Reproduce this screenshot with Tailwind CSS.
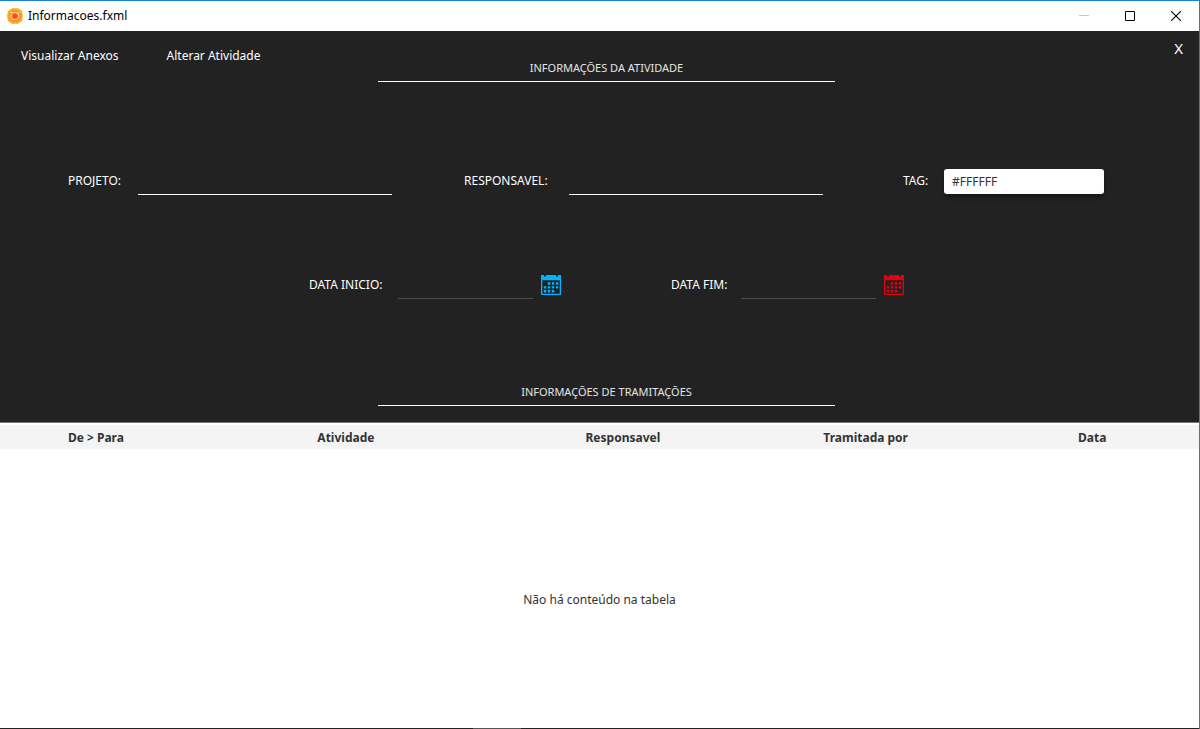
<!DOCTYPE html>
<html lang="pt-BR">
<head>
<meta charset="utf-8">
<meta name="viewport" content="width=device-width, initial-scale=1">
<title>Informacoes.fxml</title>
<script src="https://cdn.jsdelivr.net/npm/@tailwindcss/browser@4"></script>
</head>
<body class="flex min-h-screen flex-col border-t border-r border-[#1883d7] bg-white font-['Noto_Sans','Open_Sans',sans-serif] text-[12px] leading-4 text-black">
  <header class="flex h-[30px] shrink-0 items-center pl-[7px]">
    <svg class="size-4" viewBox="0 0 16 16" aria-hidden="true">
      <path d="M5 .2h6L15 3l.9 5-.9 5-4 2.800H5L1 13 .1 8 1 3z" fill="#fdaa1c"/>
      <circle cx="8" cy="8" r="5.500" fill="#fb8020"/>
      <circle cx="8" cy="8" r="2.500" fill="#f4511e"/>
      <path d="M3.500 4 6 5Q9 3.500 11 5.500L12.500 4.500M11 5.500Q13 8.500 10.500 11Q7.500 12.800 5 11Q3 8.800 4.500 6" fill="none" stroke="#ffe9cf" stroke-width="1"/>
    </svg>
    <h1 class="ml-[5px] flex-1">Informacoes.fxml</h1>
    <button type="button" aria-label="Minimizar" class="flex h-full w-[46px] items-center justify-center"><svg class="size-[10px]" viewBox="0 0 10 10"><path d="M0 4.500h10" stroke="#c8c8c8"/></svg></button>
    <button type="button" aria-label="Maximizar" class="flex h-full w-[46px] items-center justify-center"><svg class="size-[10px]" viewBox="0 0 10 10"><path d="M.5.5h9v9h-9z" fill="none" stroke="#000"/></svg></button>
    <button type="button" aria-label="Fechar janela" class="flex h-full w-[46px] items-center justify-center"><svg class="size-[10px]" viewBox="0 0 10 10"><path d="m0 0 10 10M10 0 0 10" stroke="#000" stroke-width="1.100"/></svg></button>
  </header>

  <main class="flex flex-1 flex-col">
    <section class="border-b border-[#777] bg-[#222] pb-4 text-white">
      <div class="grid grid-cols-[378fr_457fr_364fr]">
        <nav class="flex items-start gap-12 pt-[17px] pl-[21px]">
          <button type="button">Visualizar Anexos</button>
          <button type="button">Alterar Atividade</button>
        </nav>
        <h2 class="border-b border-white pt-[29px] pb-[5px] text-center text-[11px] text-[#e4e4e4]">INFORMAÇÕES DA ATIVIDADE</h2>
        <div class="flex items-start justify-end pt-[7px] pr-4"><button type="button" aria-label="Fechar" class="text-[15px] leading-5">X</button></div>
      </div>

      <form>
        <div class="mt-[87px] grid grid-cols-[68fr_70fr_254fr_72fr_105fr_254fr_80fr_41fr_160fr_95fr]">
          <label for="projeto" class="col-start-2 pt-1 whitespace-nowrap">PROJETO:</label>
          <input id="projeto" type="text" class="h-[26px] w-full min-w-0 border-b border-white bg-transparent px-1 outline-none">
          <label for="responsavel" class="col-start-5 pt-1 whitespace-nowrap">RESPONSAVEL:</label>
          <input id="responsavel" type="text" class="h-[26px] w-full min-w-0 border-b border-white bg-transparent px-1 outline-none">
          <label for="tag" class="col-start-8 pt-1 whitespace-nowrap">TAG:</label>
          <select id="tag" class="h-[25px] w-full min-w-0 appearance-none rounded-[3px] bg-white px-2 text-[#333] shadow-md shadow-black/30"><option>#FFFFFF</option></select>
        </div>

        <div class="mt-[78px] grid grid-cols-[309fr_89fr_135fr_8fr_130fr_70fr_135fr_8fr_315fr]">
          <label for="inicio" class="col-start-2 pt-1 whitespace-nowrap">DATA INICIO:</label>
          <input id="inicio" type="text" class="h-[26px] w-full min-w-0 border-b border-[#4d4d4d] bg-transparent px-1 outline-none">
          <button type="button" aria-label="Escolher data de início" class="col-start-5 mt-[2px] size-5 text-[#00b4ff]">
            <svg class="size-5" viewBox="0 0 20 20" fill="currentColor"><path fill-rule="evenodd" d="M0 0h3v1.500h2V0h10v1.500h2V0h3v20H0zM1.300 5.300v13.400h17.400V5.300z"/><path d="M6.800 7.300h2.500v2.400H6.800zm4 0h2.500v2.400h-2.500zm4 0h2.500v2.400h-2.500zM2.800 11.200h2.500v2.400H2.800zm4 0h2.500v2.400H6.800zm4 0h2.500v2.400h-2.500zm4 0h2.500v2.400h-2.500zM2.800 15h2.500v2.400H2.800zm4 0h2.500v2.400H6.800zm4 0h2.500v2.400h-2.500z"/></svg>
          </button>
          <label for="fim" class="pt-1 whitespace-nowrap">DATA FIM:</label>
          <input id="fim" type="text" class="h-[26px] w-full min-w-0 border-b border-[#4d4d4d] bg-transparent px-1 outline-none">
          <button type="button" aria-label="Escolher data de fim" class="col-start-9 mt-[2px] size-5 text-[#e3000f]">
            <svg class="size-5" viewBox="0 0 20 20" fill="currentColor"><path fill-rule="evenodd" d="M0 0h3v1.500h2V0h10v1.500h2V0h3v20H0zM1.300 5.300v13.400h17.400V5.300z"/><path d="M6.800 7.300h2.500v2.400H6.800zm4 0h2.500v2.400h-2.500zm4 0h2.500v2.400h-2.500zM2.800 11.200h2.500v2.400H2.800zm4 0h2.500v2.400H6.800zm4 0h2.500v2.400h-2.500zm4 0h2.500v2.400h-2.500zM2.800 15h2.500v2.400H2.800zm4 0h2.500v2.400H6.800zm4 0h2.500v2.400h-2.500z"/></svg>
          </button>
        </div>
      </form>

      <div class="mt-[85px] grid grid-cols-[378fr_457fr_364fr]">
        <h2 class="col-start-2 border-b border-white pb-[5px] text-center text-[11px] text-[#e4e4e4]">INFORMAÇÕES DE TRAMITAÇÕES</h2>
      </div>
    </section>

    <div class="flex flex-1 flex-col pt-[2px]">
      <table class="w-full flex-1 table-fixed text-[#333]">
        <thead>
          <tr class="h-6 bg-[#f4f4f4]">
            <th scope="col" class="w-[16%] p-0 pt-[2px]">De &gt; Para</th>
            <th scope="col" class="w-[25.700%] p-0 pt-[2px]">Atividade</th>
            <th scope="col" class="w-[20.500%] p-0 pt-[2px]">Responsavel</th>
            <th scope="col" class="w-[20%] p-0 pt-[2px]">Tramitada por</th>
            <th scope="col" class="p-0 pt-[2px]">Data</th>
          </tr>
        </thead>
        <tbody>
          <tr><td colspan="5" class="pt-[22px] text-center align-middle">Não há conteúdo na tabela</td></tr>
        </tbody>
      </table>
    </div>
  </main>
  <footer class="flex h-px justify-center bg-[#222]"><span class="mr-[206px] h-px w-12 bg-[#555]"></span></footer>
</body>
</html>
